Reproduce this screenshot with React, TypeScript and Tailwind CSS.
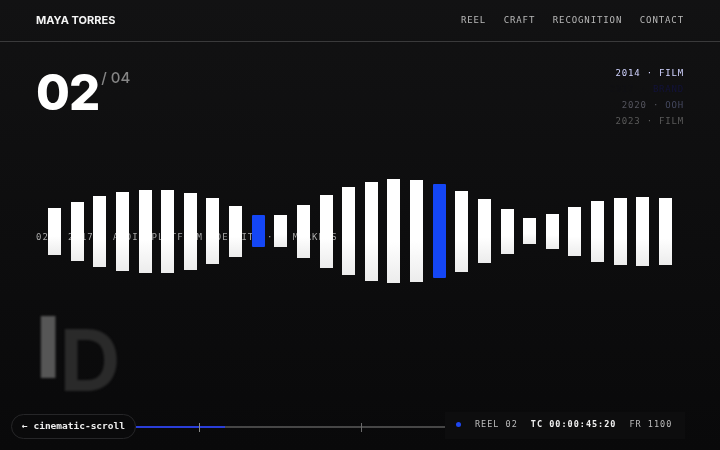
const mono = "font-['DejaVu_Sans_Mono','Liberation_Mono',monospace]";

const navItems = ["REEL", "CRAFT", "RECOGNITION", "CONTACT"];

const bars = [
  47, 59, 71, 79, 83, 83, 77, 66, 51, 32, 32, 53, 73, 88, 99, 104, 102, 94, 81, 64, 45, 26, 35, 49, 61, 67, 69, 67,
];
const accentBars = [9, 17];

function Header() {
  return (
    <header className="flex h-[42px] shrink-0 items-center justify-between border-b border-[#3a3a3b] pl-9 pr-9">
      <span className="text-[11px] font-bold text-[#f5f5f5]">MAYA TORRES</span>
      <nav className={`${mono} flex gap-[17.5px] text-[9px] tracking-[0.9px] text-[#b8b8b8]`}>
        {navItems.map((item) => (
          <span key={item}>{item}</span>
        ))}
      </nav>
    </header>
  );
}

function Counter() {
  return (
    <div className="flex items-start">
      <span className="text-[49px] leading-[52px] font-extrabold tracking-[-0.02em] text-white">02</span>
      <span className="mt-[1px] ml-[2px] text-[15px] leading-[20px] font-medium text-[#858585]">/ 04</span>
    </div>
  );
}

function Credits() {
  return (
    <div className={`${mono} -mt-[2px] flex flex-col items-end text-[9px] leading-[16px] tracking-[0.8px]`}>
      <span className="text-[#d0d3ff]">2014 · FILM</span>
      <span className="text-[#12123a]">
        <span className="text-[#101014]">2017 · </span>BRAND
      </span>
      <span className="text-[#55555e]">
        2020 · <span className="text-[#44485f]">OOH</span>
      </span>
      <span className="text-[#5a5a5a]">2023 · FILM</span>
    </div>
  );
}

function Waveform() {
  return (
    <div className="relative mt-[51px] h-[120px] shrink-0">
      <p
        className={`${mono} absolute top-[60px] left-9 text-[9px] leading-[12px] tracking-[1px] whitespace-nowrap text-[#a8a8a8]`}
      >
        02 — 2017 · AUDIO PLATFORM IDENTITY · 4 MARKETS
      </p>
      <div className="relative flex h-full items-center gap-[9.63px] pl-[48px]">
        {bars.map((height, i) => (
          <div
            key={i}
            style={{ height }}
            className={
              accentBars.includes(i)
                ? "w-[13px] shrink-0 rounded-[1px] bg-[#1446f5]"
                : "w-[13px] shrink-0 bg-gradient-to-b from-white from-60% to-[#ececec]"
            }
          />
        ))}
      </div>
    </div>
  );
}

function GhostMark() {
  return (
    <div className="absolute top-[305px] left-[36px] flex items-start text-[85px] leading-[85px] blur-[1px]">
      <span className="font-extrabold tracking-[-1px] text-[#565656]">I</span>
      <span className="mt-[13px] font-bold text-[#2a2a2a]">D</span>
    </div>
  );
}

function Timeline() {
  return (
    <div className="relative mt-[14px] flex-1">
      <div className="h-[2px] bg-[#464646]" />
      <div className="absolute top-0 left-0 h-[2px] w-[89px] bg-[#2a3ed8]" />
      <div className="absolute top-[-3px] left-[63px] h-[9px] w-px bg-[#8a8a8a]" />
      <div className="absolute top-[-3px] left-[225px] h-[9px] w-px bg-[#6a6a6a]" />
    </div>
  );
}

function StatusBar() {
  return (
    <div
      className={`${mono} flex h-[27px] w-[240px] shrink-0 items-center bg-[#0d0d0e] pb-[2px] pl-[11px] text-[8.5px] tracking-[1px] text-[#bdbdbd] blur-[0.3px]`}
    >
      <span className="h-[5px] w-[5px] rounded-full bg-[#1e46f0]" />
      <span className="ml-[14px]">REEL 02</span>
      <span className="ml-[13px] font-bold text-[#f0f0f0]">TC 00:00:45:20</span>
      <span className="ml-[13px]">FR 1100</span>
    </div>
  );
}

function Footer() {
  return (
    <footer className="mt-auto mb-[11px] ml-[11px] mr-[35px] flex items-start">
      <span
        className={`${mono} mt-[2px] flex h-[25px] w-[125px] shrink-0 items-center justify-center rounded-full border border-[#262628] bg-[#0a0a0b] text-[9.5px] font-bold text-[#eeeeee]`}
      >
        ← cinematic-scroll
      </span>
      <Timeline />
      <StatusBar />
    </footer>
  );
}

export default function App() {
  return (
    <div className="relative flex h-[450px] w-full flex-col overflow-hidden bg-gradient-to-b from-[#121213] to-[#09090a] font-['Inter',sans-serif] blur-[0.3px]">
      <Header />
      <section className="flex h-[78px] shrink-0 justify-between px-9 pt-[25px]">
        <Counter />
        <Credits />
      </section>
      <Waveform />
      <GhostMark />
      <Footer />
    </div>
  );
}
